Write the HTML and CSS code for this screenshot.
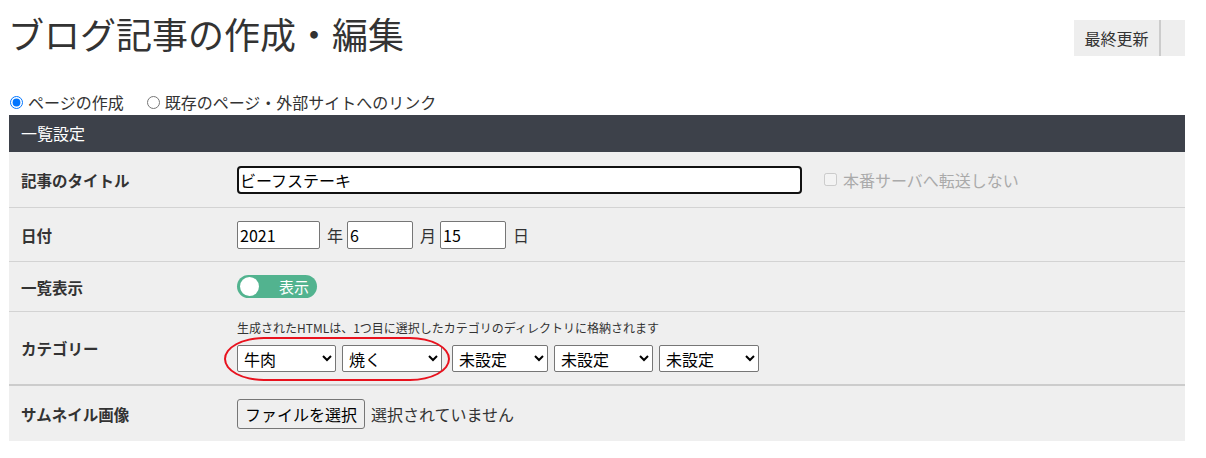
FILE: index.html
```html
<!DOCTYPE html>
<html lang="ja">
<head>
  <meta charset="utf-8">
  <title>ブログ記事の作成・編集</title>
  <link rel="stylesheet" href="styles.css">
</head>
<body>
  <div class="page">

    <div class="page-head">
      <h1>ブログ記事の作成・編集</h1>
      <div class="btn-group">
        <button class="btn-update">最終更新</button>
        <button class="btn-more"></button>
      </div>
    </div>

    <div class="mode-select">
      <label><input type="radio" name="mode" checked> ページの作成</label>
      <label><input type="radio" name="mode"> 既存のページ・外部サイトへのリンク</label>
    </div>

    <div class="panel">
      <div class="panel-title">一覧設定</div>

      <div class="row row-title">
        <div class="row-label">記事のタイトル</div>
        <div class="row-body">
          <input type="text" class="title-input" value="ビーフステーキ">
          <label class="no-transfer"><input type="checkbox" disabled> 本番サーバへ転送しない</label>
        </div>
      </div>

      <div class="row row-date">
        <div class="row-label">日付</div>
        <div class="row-body">
          <input type="text" class="date-input date-year" value="2021">
          <span class="date-unit">年</span>
          <input type="text" class="date-input" value="6">
          <span class="date-unit">月</span>
          <input type="text" class="date-input" value="15">
          <span class="date-unit">日</span>
        </div>
      </div>

      <div class="row row-list">
        <div class="row-label">一覧表示</div>
        <div class="row-body">
          <div class="toggle"><span class="knob"></span><span class="toggle-text">表示</span></div>
        </div>
      </div>

      <div class="row row-category">
        <div class="row-label">カテゴリー</div>
        <div class="row-body column">
          <div class="note">生成されたHTMLは、1つ目に選択したカテゴリのディレクトリに格納されます</div>
          <div class="selects">
            <div class="marked">
              <select><option>牛肉</option></select>
              <select class="wide"><option>焼く</option></select>
              <span class="red-mark"></span>
            </div>
            <select class="narrow"><option>未設定</option></select>
            <select><option>未設定</option></select>
            <select class="wide"><option>未設定</option></select>
          </div>
        </div>
      </div>

      <div class="row row-thumb">
        <div class="row-label">サムネイル画像</div>
        <div class="row-body">
          <button class="file-btn">ファイルを選択</button>
          <span class="file-name">選択されていません</span>
        </div>
      </div>
    </div>

  </div>
</body>
</html>
```

FILE: styles.css
```css
body { margin: 0; font-family: "Noto Sans CJK JP", "Noto Sans", sans-serif; color: #333; background: #fff; }
.page { width: 1176px; margin-left: 9px; }

.page-head { display: flex; justify-content: space-between; align-items: flex-start; }
h1 { margin: 12px 0 0 -1px; font-size: 36px; font-weight: normal; line-height: 43px; color: #333; }
.btn-group { display: flex; margin-top: 20px; }
.btn-group button { height: 36px; border: none; background: #eee; font-family: inherit; font-size: 16px; color: #333; padding: 0; }
.btn-update { width: 87px; border-right: 2px solid #ccc !important; }
.btn-more { width: 24px; }

.mode-select { display: flex; gap: 22px; margin-top: 36px; height: 20px; align-items: center; font-size: 16px; line-height: 20px; }
.mode-select label { display: flex; align-items: center; }
.mode-select input { margin: 0 5px 0 1px; width: 13px; height: 13px; }

.panel { margin-top: 3px; }
.panel-title { background: #3d414a; color: #fff; height: 37px; line-height: 37px; padding-left: 12px; font-size: 16px; }

.row { display: grid; grid-template-columns: 228px 1fr; align-items: center; background: #efefef; border-bottom: 1px solid #d3d3d3; }
.row-label { padding-left: 12px; font-size: 15.5px; font-weight: bold; color: #333; }
.row-body { display: flex; align-items: center; }
.row-body.column { flex-direction: column; align-items: flex-start; align-self: start; padding-top: 8px; }

.row-title { height: 55px; }
.row-date { height: 53px; }
.row-list { height: 49px; }
.row-category { height: 72px; border-bottom: 2px solid #ccc; }
.row-thumb { height: 55px; border-bottom: none; }

input[type="text"] { box-sizing: border-box; height: 28px; font-family: inherit; font-size: 16px; color: #000; background: #fff; border: 1px solid #767676; border-radius: 2px; padding: 0 2px; margin: 0; }
.title-input { width: 565px; border: 2px solid #111 !important; border-radius: 4px !important; padding: 0 1px !important; }
.no-transfer { display: flex; align-items: center; margin-left: 22px; color: #aaa; font-size: 16px; }
.no-transfer input { margin: 0 6px 0 0; width: 13px; height: 13px; }

.date-input { width: 66px; }
.date-year { width: 83px; }
.date-unit { font-size: 16px; margin: 0 4px 0 7px; color: #333; }

.toggle { width: 80px; height: 23px; border-radius: 12px; background: #52b38f; display: flex; align-items: center; }
.knob { width: 19px; height: 19px; border-radius: 50%; background: #fff; margin-left: 3px; }
.toggle-text { color: #fff; font-size: 15px; margin-left: 20px; line-height: 23px; }

.note { font-size: 12px; line-height: 16px; margin-bottom: 9px; color: #333; }
.selects { display: flex; align-items: center; }
.marked { position: relative; display: flex; margin-right: 4px; }
select { box-sizing: border-box; width: 99px; height: 27px; margin-right: 6px; font-family: inherit; font-size: 16px; color: #000; background: #fff; border: 1px solid #767676; border-radius: 2px; padding: 0 2px; }
select.wide { width: 100px; }
select.narrow { width: 96px; }
.red-mark { position: absolute; left: -13px; top: -8px; width: 226px; height: 44px; box-sizing: border-box; border: 2px solid #e8121e; border-radius: 40px / 22px; pointer-events: none; }

.file-btn { box-sizing: border-box; height: 30px; width: 128px; font-family: inherit; font-size: 16px; color: #000; background: #efefef; border: 1px solid #767676; border-radius: 3px; padding: 0; }
.file-name { margin-left: 6px; font-size: 16px; color: #333; }
```
